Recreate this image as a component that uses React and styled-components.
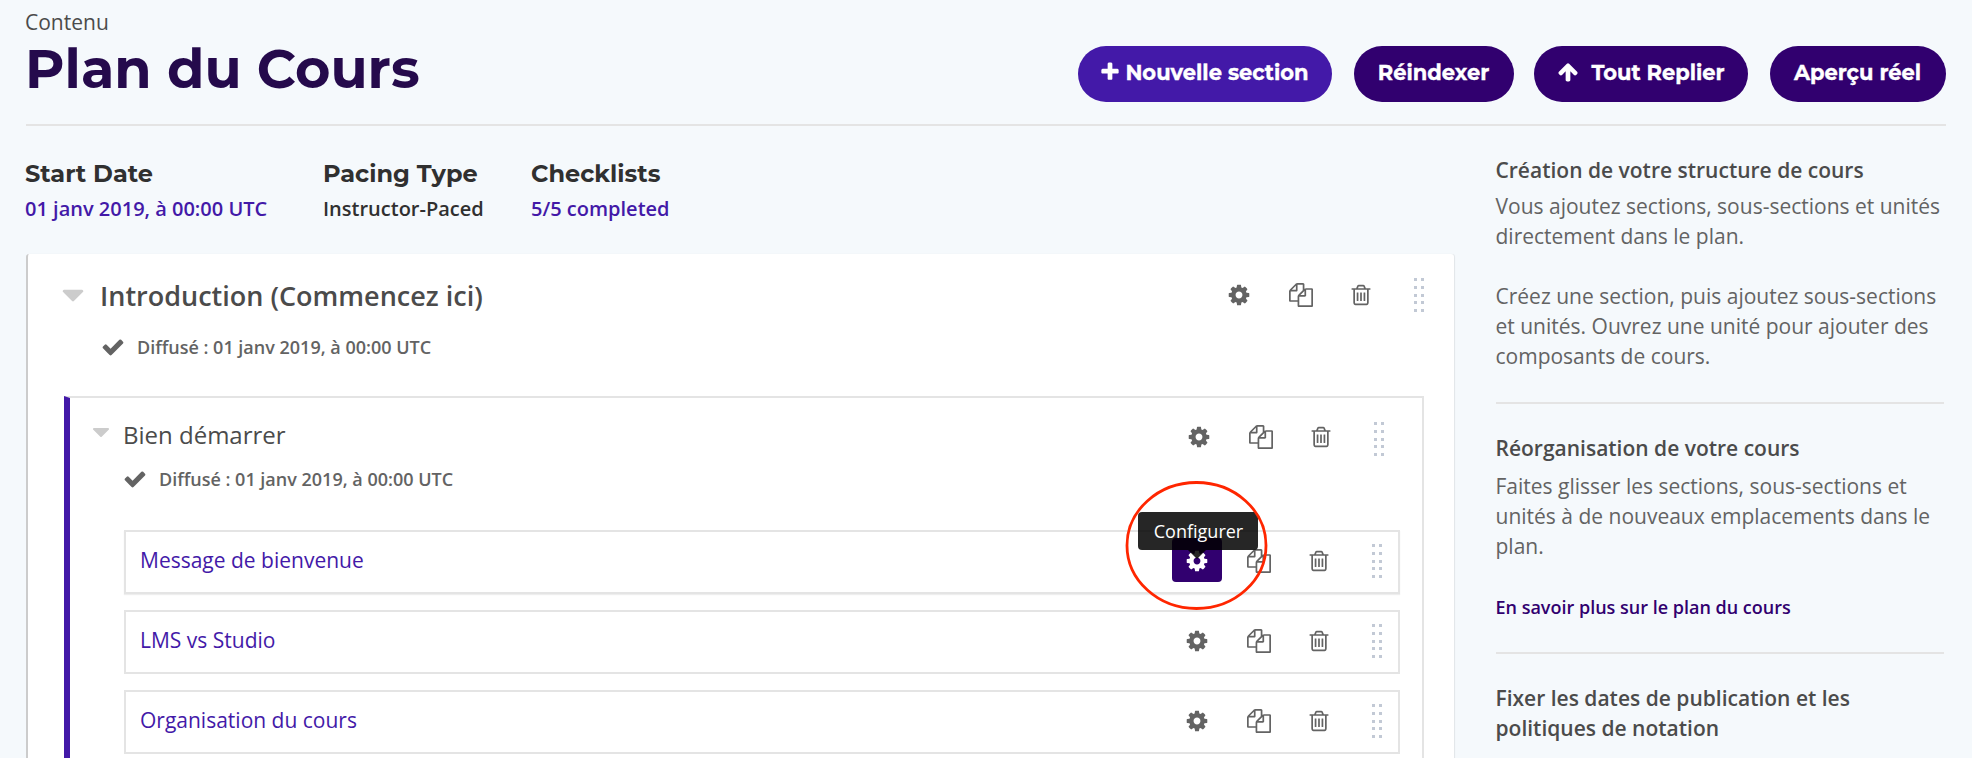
import React from "react";
import styled, { createGlobalStyle } from "styled-components";

const Global = createGlobalStyle`
  * { box-sizing: border-box; }
  body {
    margin: 0;
    background: #f5f9fc;
    color: #636363;
    font-family: "Open Sans", "Noto Sans", sans-serif;
    font-size: 20px;
  }
  h1, h2, h3, h4, p, ul { margin: 0; padding: 0; }
`;

const display = `"Montserrat", "Inter", sans-serif`;

const paths = {
  cog: "M1152 896q0-106-75-181t-181-75-181 75-75 181 75 181 181 75 181-75 75-181zm512-109v222q0 12-8 23t-20 13l-185 28q-19 54-39 91 35 50 107 138 10 12 10 25t-9 23q-27 37-99 108t-94 71q-12 0-26-9l-138-108q-44 23-91 38-16 136-29 186-7 28-36 28h-222q-14 0-24.500-8.500t-11.500-21.500l-28-184q-49-16-90-37l-141 107q-10 9-25 9-14 0-25-11-126-114-165-168-7-10-7-23 0-12 8-23 15-21 51-66.500t54-70.500q-27-50-41-99l-183-27q-13-2-21-12.500t-8-23.500v-222q0-12 8-23t19-13l186-28q14-46 39-92-40-57-107-138-10-12-10-24 0-10 9-23 26-36 98.500-107.500t94.500-71.500q13 0 26 10l138 107q44-23 91-38 16-136 29-186 7-28 36-28h222q14 0 24.500 8.500t11.500 21.500l28 184q49 16 90 37l142-107q9-9 24-9 13 0 25 10 129 119 165 170 7 8 7 22 0 12-8 23-15 21-51 66.500t-54 70.500q26 50 41 98l183 28q13 2 21 12.500t8 23.500z",
  copy: "M1696 384q40 0 68 28t28 68v1216q0 40-28 68t-68 28h-960q-40 0-68-28t-28-68v-288h-544q-40 0-68-28t-28-68v-672q0-40 20-88t48-76l408-408q28-28 76-48t88-20h416q40 0 68 28t28 68v328q68-40 128-40h416zm-544 213l-299 299h299v-299zm-640-384l-299 299h299v-299zm196 647l316-316v-416h-384v416q0 40-28 68t-68 28h-416v640h512v-256q0-40 20-88t48-76zm956 804v-1152h-384v416q0 40-28 68t-68 28h-416v640h896z",
  trash: "M704 736v576q0 14-9 23t-23 9h-64q-14 0-23-9t-9-23v-576q0-14 9-23t23-9h64q14 0 23 9t9 23zm256 0v576q0 14-9 23t-23 9h-64q-14 0-23-9t-9-23v-576q0-14 9-23t23-9h64q14 0 23 9t9 23zm256 0v576q0 14-9 23t-23 9h-64q-14 0-23-9t-9-23v-576q0-14 9-23t23-9h64q14 0 23 9t9 23zm128 724v-948h-896v948q0 22 7 40.500t14.500 27 10.500 8.500h832q3 0 10.500-8.500t14.500-27 7-40.500zm-672-1076h448l-48-117q-7-9-17-11h-317q-10 2-17 11zm928 32v64q0 14-9 23t-23 9h-96v948q0 83-47 143.500t-113 60.500h-832q-66 0-113-58.500t-47-141.500v-952h-96q-14 0-23-9t-9-23v-64q0-14 9-23t23-9h309l70-167q15-37 54-63t79-26h320q40 0 79 26t54 63l70 167h309q14 0 23 9t9 23z",
  check: "M1671 566q0 40-28 68l-724 724-136 136q-28 28-68 28t-68-28l-136-136-362-362q-28-28-28-68t28-68l136-136q28-28 68-28t68 28l294 295 656-657q28-28 68-28t68 28l136 136q28 28 28 68z",
  plus: "M1600 736v192q0 40-28 68t-68 28h-416v416q0 40-28 68t-68 28h-192q-40 0-68-28t-28-68v-416h-416q-40 0-68-28t-28-68v-192q0-40 28-68t68-28h416v-416q0-40 28-68t68-28h192q40 0 68 28t28 68v416h416q40 0 68 28t28 68z",
  arrowUp: "M1675 971q0 51-37 90l-75 75q-38 38-91 38-54 0-90-38l-294-293v704q0 52-37.500 84.500t-90.500 32.500h-128q-53 0-90.500-32.500t-37.500-84.500v-704l-294 293q-36 38-90 38t-90-38l-75-75q-38-38-38-90 0-53 38-91l651-651q35-37 90-37 54 0 91 37l651 651q37 39 37 91z",
  caret: "M1408 704q0 26-19 45l-448 448q-19 19-45 19t-45-19l-448-448q-19-19-19-45t19-45 45-19h896q26 0 45 19t19 45z",
};

const Svg = styled.svg`
  display: block;
  flex: none;
  width: ${(p) => p.$size}px;
  height: ${(p) => p.$size}px;
  fill: currentColor;
`;

const Icon = ({ name, size = 24, ...rest }) => (
  <Svg $size={size} viewBox="0 0 1792 1792" aria-hidden="true" {...rest}>
    <path d={paths[name]} />
  </Svg>
);

const Page = styled.div`
  width: 1972px;
  height: 758px;
  overflow: hidden;
  padding: 0 26px;
`;

const Header = styled.header`
  display: flex;
  justify-content: space-between;
  align-items: flex-start;
  height: 126px;
  border-bottom: 2px solid #e4e4e4;
`;

const Heading = styled.div`
  padding-top: 7px;
`;

const Eyebrow = styled.div`
  font-size: 21px;
  line-height: 30px;
  color: #4b4b4b;
  margin-left: -1px;
`;

const Title = styled.h1`
  margin-left: -1px;
  font-family: ${display};
  font-size: 54.1px;
  font-weight: 700;
  line-height: 64px;
  color: #250a4c;
`;

const Actions = styled.nav`
  display: flex;
  padding-top: 46px;
`;

const Button = styled.button`
  display: flex;
  align-items: center;
  justify-content: center;
  gap: ${(p) => p.$gap || 0}px;
  width: ${(p) => p.$width}px;
  height: 56px;
  margin: 0 0 0 ${(p) => p.$before || 0}px;
  padding: 0 ${(p) => p.$inset || 0}px 4px 0;
  border: 0;
  border-radius: 28px;
  background: ${(p) => (p.$primary ? "#4319a8" : "#31006f")};
  color: #fff;
  font-family: ${display};
  font-size: 21px;
  font-weight: 700;
  white-space: nowrap;
  -webkit-text-stroke: 0.35px #fff;
`;

const Columns = styled.div`
  display: flex;
  justify-content: space-between;
  align-items: flex-start;
`;

const Main = styled.main`
  width: 1428px;
`;

const Meta = styled.div`
  display: flex;
  height: 128px;
  padding-top: 32px;
  margin-left: -1px;
`;

const MetaItem = styled.div`
  width: ${(p) => p.$width}px;
  white-space: nowrap;
`;

const MetaLabel = styled.h2`
  font-family: ${display};
  font-size: 24px;
  font-weight: 700;
  line-height: 32px;
  color: #303030;
`;

const MetaValue = styled.p`
  margin-top: 4px;
  font-size: 20px;
  font-weight: 600;
  line-height: 30px;
  color: ${(p) => (p.$link ? "#4319a8" : "#303030")};
`;

const Section = styled.section`
  height: 560px;
  padding: 0 30px 0 36px;
  border-left: 2px solid #ccc;
  border-radius: 3px 3px 0 0;
  background: #fff;
  box-shadow: 1px 0 1px rgba(0, 0, 0, 0.08);
`;

const SectionHead = styled.div`
  display: flex;
  justify-content: space-between;
  align-items: flex-start;
  height: 142px;
  padding-top: 24px;
`;

const TitleRow = styled.div`
  display: flex;
  align-items: flex-start;
  color: #4b4b4b;
`;

const SectionCaret = styled(Icon)`
  width: 36px;
  height: 36px;
  margin: -1px 0 0 -9px;
  color: #ccc;
`;

const SectionTitle = styled.h3`
  margin-left: 9px;
  font-size: 27px;
  font-weight: 600;
  line-height: 36px;
`;

const Status = styled.p`
  display: flex;
  align-items: center;
  margin: ${(p) => p.$margin};
  font-size: 18px;
  font-weight: 600;
  line-height: 28px;
  gap: 12.5px;
  color: #636363;
  white-space: nowrap;
`;

const Subsection = styled.section`
  height: 420px;
  padding: 0 22px 0 54px;
  border: 2px solid #e4e4e4;
  border-left: 6px solid #4319a8;
`;

const SubHead = styled.div`
  display: flex;
  justify-content: space-between;
  align-items: flex-start;
  height: 132px;
  padding: 14px 16px 0 0;
`;

const SubCaret = styled(Icon)`
  width: 28px;
  height: 28px;
  margin: 6px 0 0 -37px;
  color: #ccc;
`;

const SubTitle = styled.h4`
  margin-left: 8px;
  font-size: 24px;
  font-weight: 400;
  line-height: 46px;
`;

const Tools = styled.div`
  display: flex;
  align-items: flex-start;
  height: 44px;
  margin-top: ${(p) => p.$top}px;
  color: #636363;
`;

const Tool = styled.span`
  position: relative;
  display: flex;
  align-items: center;
  justify-content: center;
  width: ${(p) => p.$width}px;
  height: 44px;
  padding-top: 2.7px;
  border-radius: 4px;
  color: ${(p) => (p.$active ? "#fff" : "inherit")};
  background: ${(p) => (p.$active ? "#31006f" : "transparent")};
`;

const Handle = styled.span`
  display: grid;
  grid-template-columns: 3px 3px;
  gap: 4.75px 4px;
  grid-auto-rows: 3px;
  margin: ${(p) => p.$drop}px 0 0 28.5px;
`;

const Dot = styled.i`
  background: #c2c9d5;
`;

const UnitList = styled.ul`
  display: flex;
  flex-direction: column;
  gap: 16px;
  list-style: none;
`;

const Unit = styled.li`
  display: flex;
  align-items: center;
  justify-content: space-between;
  height: 64px;
  padding: 0 16px 0 14px;
  border: 2px solid #e4e4e4;
  box-shadow: ${(p) => (p.$active ? "0 1px 1px #eee" : "none")};
`;

const UnitLink = styled.a`
  margin-top: -5px;
  font-size: 21px;
  color: #4319a8;
`;

const Tooltip = styled.span`
  position: absolute;
  z-index: 2;
  left: -34px;
  top: -26px;
  width: 120px;
  height: 38px;
  padding-left: 1px;
  border-radius: 4px;
  background: rgba(0, 0, 0, 0.85);
  color: #fff;
  font-size: 18px;
  line-height: 38px;
  text-align: center;

  &::after {
    content: "";
    position: absolute;
    top: 38px;
    left: 50px;
    border: 9px solid transparent;
    border-bottom-width: 0;
    border-top-color: rgba(0, 0, 0, 0.85);
  }
`;

const Ring = styled.svg`
  position: absolute;
  z-index: 3;
  left: -47px;
  top: -58px;
  width: 144px;
  height: 132px;
  fill: none;
  stroke: #ff2600;
  stroke-width: 2.8;
`;

const Aside = styled.aside`
  width: 450px;
  padding: 29px 2px 0 0;
`;

const Help = styled.section`
  height: ${(p) => p.$height}px;
  margin-bottom: 29px;
  border-bottom: 2px solid #e4e4e4;
`;

const HelpTitle = styled.h3`
  margin: 0 0 ${(p) => p.$after || 6}px -0.5px;
  font-size: 21px;
  font-weight: 600;
  line-height: 30px;
  color: #4b4b4b;
`;

const HelpText = styled.p`
  margin: 0 0 ${(p) => p.$after || 30}px -0.5px;
  font-size: 21px;
  line-height: 30px;
  white-space: nowrap;
`;

const HelpLink = styled.a`
  display: block;
  margin-left: -0.5px;
  font-size: 18px;
  font-weight: 600;
  line-height: 30px;
  color: #31006f;
`;

const ToolSet = ({ top, drop = 6, active }) => (
  <Tools $top={top}>
    <Tool $width={50} $active={active}>
      <Icon name="cog" />
      {active && (
        <>
          <Tooltip>Configurer</Tooltip>
          <Ring viewBox="0 0 144 132">
            <ellipse cx="71.5" cy="65.5" rx="69.5" ry="63" />
          </Ring>
        </>
      )}
    </Tool>
    <Tool $width={73}>
      <Icon name="copy" />
    </Tool>
    <Tool $width={48.5}>
      <Icon name="trash" />
    </Tool>
    <Handle $drop={drop}>
      {Array.from({ length: 10 }, (_, i) => (
        <Dot key={i} />
      ))}
    </Handle>
  </Tools>
);

const units = ["Message de bienvenue", "LMS vs Studio", "Organisation du cours"];

export default function App() {
  return (
    <Page>
      <Global />
      <Header>
        <Heading>
          <Eyebrow>Contenu</Eyebrow>
          <Title>Plan du Cours</Title>
        </Heading>
        <Actions>
          <Button $primary $width={254} $gap={4} $inset={2}>
            <Icon name="plus" size={22} />
            Nouvelle section
          </Button>
          <Button $width={160} $before={22} $inset={1}>Réindexer</Button>
          <Button $width={214} $before={20} $gap={12}>
            <Icon name="arrowUp" size={22} />
            Tout Replier
          </Button>
          <Button $width={176} $before={22} $inset={1}>Aperçu réel</Button>
        </Actions>
      </Header>
      <Columns>
        <Main>
          <Meta>
            <MetaItem $width={298}>
              <MetaLabel>Start Date</MetaLabel>
              <MetaValue $link>01 janv 2019, à 00:00 UTC</MetaValue>
            </MetaItem>
            <MetaItem $width={208}>
              <MetaLabel>Pacing Type</MetaLabel>
              <MetaValue>Instructor-Paced</MetaValue>
            </MetaItem>
            <MetaItem $width={200}>
              <MetaLabel>Checklists</MetaLabel>
              <MetaValue $link>5/5 completed</MetaValue>
            </MetaItem>
          </Meta>
          <Section>
            <SectionHead>
              <div>
                <TitleRow>
                  <SectionCaret name="caret" />
                  <SectionTitle>Introduction (Commencez ici)</SectionTitle>
                </TitleRow>
                <Status $margin="19px 0 0 36.5px">
                  <Icon name="check" />
                  Diffusé : 01 janv 2019, à 00:00 UTC
                </Status>
              </div>
              <ToolSet top={-6} />
            </SectionHead>
            <Subsection>
              <SubHead>
                <div>
                  <TitleRow>
                    <SubCaret name="caret" />
                    <SubTitle>Bien démarrer</SubTitle>
                  </TitleRow>
                  <Status $margin="7px 0 0 -1.5px">
                    <Icon name="check" />
                    Diffusé : 01 janv 2019, à 00:00 UTC
                  </Status>
                </div>
                <ToolSet top={2} drop={8} />
              </SubHead>
              <UnitList>
                {units.map((name, i) => (
                  <Unit key={name} $active={i === 0}>
                    <UnitLink>{name}</UnitLink>
                    <ToolSet top={-4} active={i === 0} />
                  </Unit>
                ))}
              </UnitList>
            </Subsection>
          </Section>
        </Main>
        <Aside>
          <Help $height={249}>
            <HelpTitle>Création de votre structure de cours</HelpTitle>
            <HelpText>
              Vous ajoutez sections, sous-sections et unités
              <br />
              directement dans le plan.
            </HelpText>
            <HelpText>
              Créez une section, puis ajoutez sous-sections
              <br />
              et unités. Ouvrez une unité pour ajouter des
              <br />
              composants de cours.
            </HelpText>
          </Help>
          <Help $height={221}>
            <HelpTitle $after={8}>Réorganisation de votre cours</HelpTitle>
            <HelpText $after={31}>
              Faites glisser les sections, sous-sections et
              <br />
              unités à de nouveaux emplacements dans le
              <br />
              plan.
            </HelpText>
            <HelpLink>En savoir plus sur le plan du cours</HelpLink>
          </Help>
          <Help $height={220}>
            <HelpTitle $after={8}>
              Fixer les dates de publication et les
              <br />
              politiques de notation
            </HelpTitle>
            <HelpText>Sélectionnez l’icône Configurer pour</HelpText>
          </Help>
        </Aside>
      </Columns>
    </Page>
  );
}
